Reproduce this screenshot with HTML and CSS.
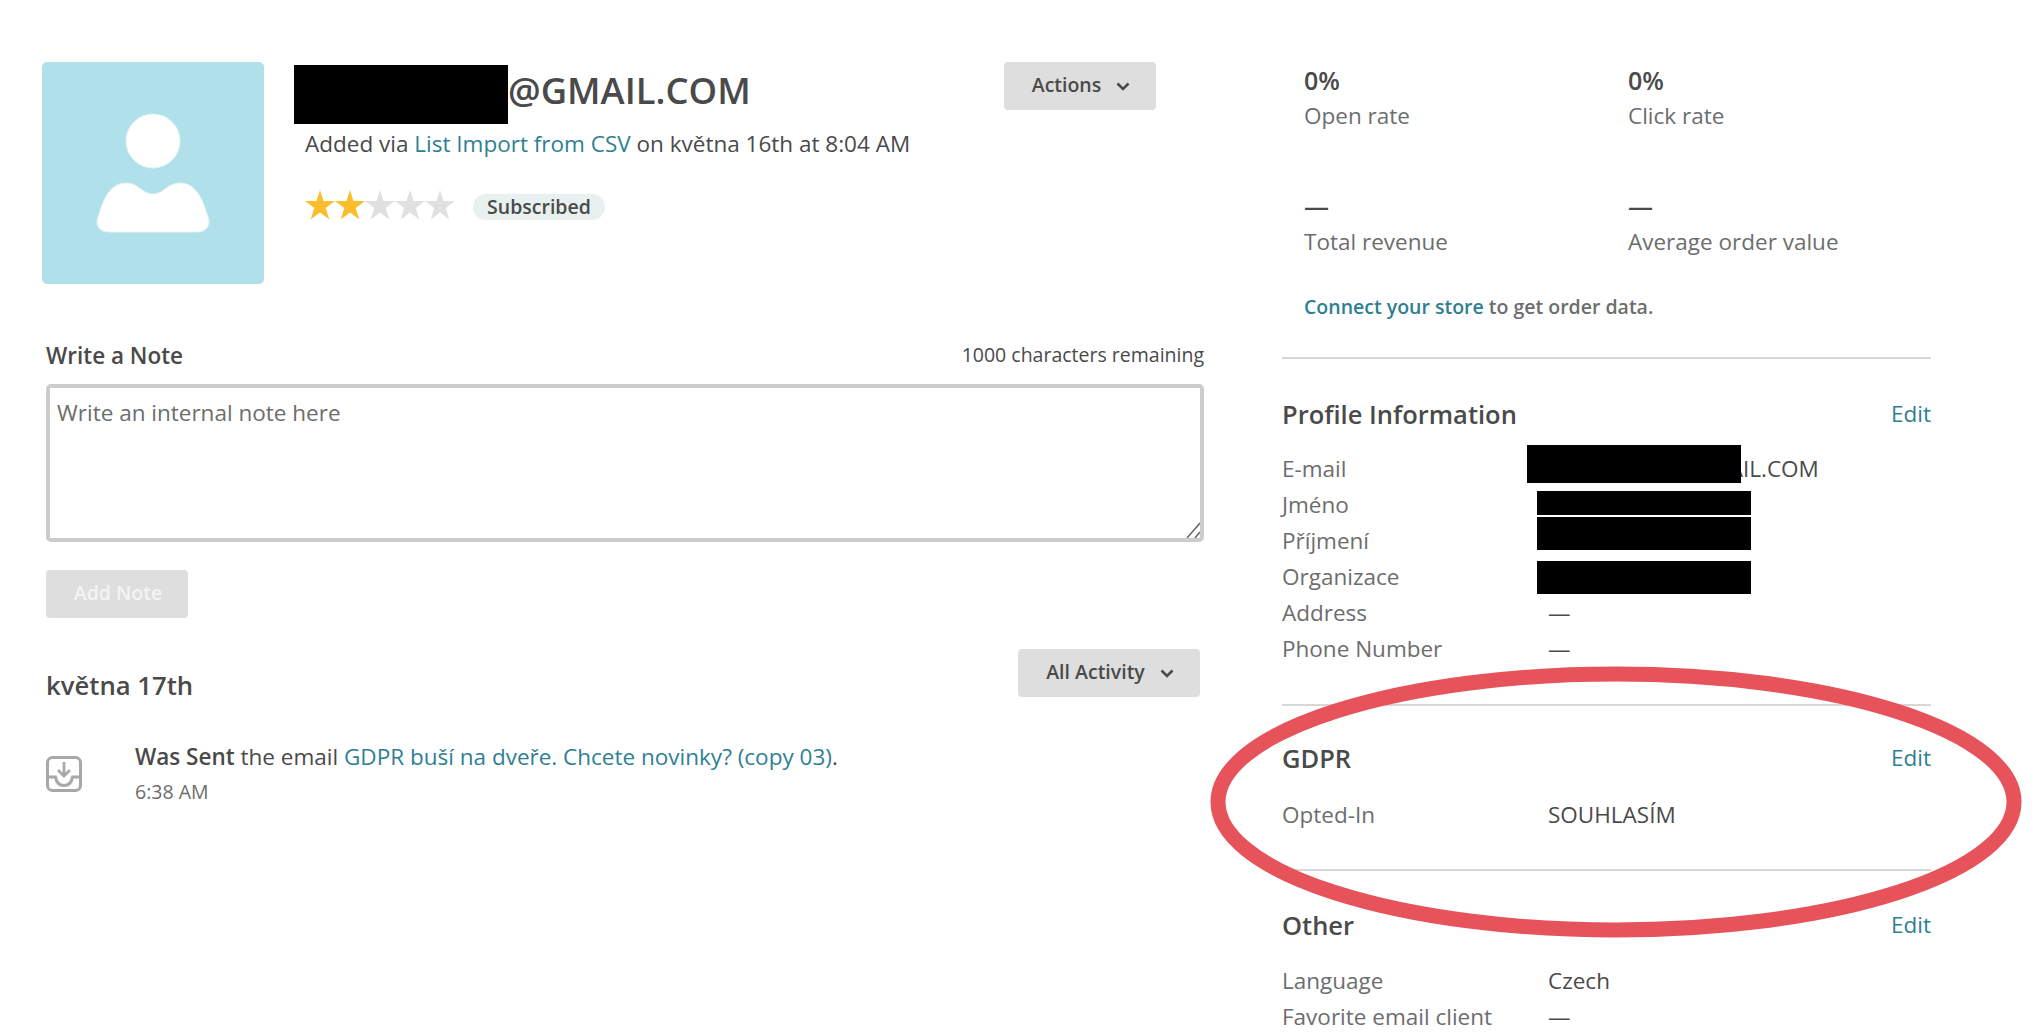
FILE: index.html
```html
<!DOCTYPE html>
<html lang="en">
<head>
<meta charset="utf-8">
<title>Profile</title>
<link rel="stylesheet" href="styles.css">
</head>
<body>
<div class="page">
  <main class="left">
    <section class="head">
      <div class="avatar">
        <svg width="222" height="222" viewBox="0 0 222 222"><circle cx="111" cy="79" r="27" fill="#fff" stroke="#e4f3f5"/><path d="M67 170H155C165 170 169 163 166 155C161 139 155 121 138 121C125 121 122 132 111 132C100 132 97 121 84 121C67 121 61 139 56 155C53 163 57 170 67 170Z" fill="#fff" stroke="#e4f3f5"/></svg>
      </div>
      <div class="who">
        <div class="title-row">
          <h1 class="title"><span class="mask-title"></span>@GMAIL.COM</h1>
          <button class="btn btn-actions">Actions<svg class="chev" width="14" height="9" viewBox="0 0 14 9"><path d="M1.500 1.500 7 7 12.500 1.500" fill="none" stroke="#4a4a4a" stroke-width="2.600"/></svg></button>
        </div>
        <p class="added">Added via <a href="#">List Import from CSV</a> on května 16th at 8:04 AM</p>
        <div class="rating">
          <svg width="150" height="30" viewBox="0 0 150 30"><path fill="#fdbe2e" d="M15 0 18.500 11H30L20.700 18 24.300 29.500 15 22.500 5.700 29.500 9.300 18 0 11H11.500Z"/><path fill="#fdbe2e" transform="translate(30)" d="M15 0 18.500 11H30L20.700 18 24.300 29.500 15 22.500 5.700 29.500 9.300 18 0 11H11.500Z"/><path fill="#e0e0e0" transform="translate(60)" d="M15 0 18.500 11H30L20.700 18 24.300 29.500 15 22.500 5.700 29.500 9.300 18 0 11H11.500Z"/><path fill="#e0e0e0" transform="translate(90)" d="M15 0 18.500 11H30L20.700 18 24.300 29.500 15 22.500 5.700 29.500 9.300 18 0 11H11.500Z"/><path fill="#e0e0e0" transform="translate(120)" d="M15 0 18.500 11H30L20.700 18 24.300 29.500 15 22.500 5.700 29.500 9.300 18 0 11H11.500Z"/></svg>
          <span class="badge">Subscribed</span>
        </div>
      </div>
    </section>

    <section class="note">
      <div class="note-top"><h2 class="note-title">Write a Note</h2><span class="remain">1000 characters remaining</span></div>
      <div class="area-wrap">
        <textarea class="area" placeholder="Write an internal note here"></textarea>
        <svg class="grip" width="14" height="16" viewBox="0 0 14 16" fill="none" stroke="#666" stroke-width="1.500"><path d="M1 16 14 1M9 16 14 10"/></svg>
      </div>
      <button class="btn btn-add">Add Note</button>
    </section>

    <section class="activity">
      <div class="act-top"><h2 class="date">května 17th</h2><button class="btn btn-all">All Activity<svg class="chev" width="14" height="9" viewBox="0 0 14 9"><path d="M1.500 1.500 7 7 12.500 1.500" fill="none" stroke="#4a4a4a" stroke-width="2.600"/></svg></button></div>
      <div class="event">
        <svg class="event-icon" width="36" height="36" viewBox="0 0 36 36" fill="none" stroke="#a8a8a8" stroke-width="3"><rect x="1.500" y="1.500" width="33" height="33" rx="5"/><path d="M1.500 21H9.500C10.500 27 14 29.500 18 29.500S25.500 27 26.500 21H34.500"/><path d="M18 6V19.500M12 14 18 20 24 14" stroke-width="2.800"/></svg>
        <div>
          <p class="event-text"><b>Was Sent</b> the email <a href="#">GDPR buší na dveře. Chcete novinky? (copy 03)</a>.</p>
          <p class="event-time">6:38 AM</p>
        </div>
      </div>
    </section>
  </main>

  <aside class="right">
    <div class="stats">
      <div class="stat"><strong>0%</strong><span>Open rate</span></div>
      <div class="stat"><strong>0%</strong><span>Click rate</span></div>
      <div class="stat"><strong>—</strong><span>Total revenue</span></div>
      <div class="stat"><strong>—</strong><span>Average order value</span></div>
    </div>
    <p class="connect"><a href="#">Connect your store</a> to get order data.</p>

    <section class="panel panel-profile">
      <div class="panel-head"><h3>Profile Information</h3><a href="#">Edit</a></div>
      <div class="row"><span>E-mail</span><span class="val val-email">@GMAIL.COM</span><i class="mask mask-email"></i></div>
      <div class="row"><span>Jméno</span><span class="val"></span><i class="mask mask-first"></i></div>
      <div class="row"><span>Příjmení</span><span class="val"></span><i class="mask mask-last"></i></div>
      <div class="row"><span>Organizace</span><span class="val"></span><i class="mask mask-org"></i></div>
      <div class="row"><span>Address</span><span class="val">—</span></div>
      <div class="row"><span>Phone Number</span><span class="val">—</span></div>
    </section>

    <section class="panel panel-gdpr">
      <div class="panel-head"><h3>GDPR</h3><a href="#">Edit</a></div>
      <div class="row"><span>Opted-In</span><span class="val">SOUHLASÍM</span></div>
    </section>

    <section class="panel panel-other">
      <div class="panel-head"><h3>Other</h3><a href="#">Edit</a></div>
      <div class="row"><span>Language</span><span class="val">Czech</span></div>
      <div class="row"><span>Favorite email client</span><span class="val">—</span></div>
    </section>
  </aside>
</div>
<svg class="circle" width="812" height="272" viewBox="0 0 812 272"><ellipse cx="406" cy="136" rx="398" ry="128" fill="none" stroke="#e6535a" stroke-width="15"/></svg>
</body>
</html>
```
FILE: styles.css
```css
* { box-sizing: border-box; }
html, body { margin: 0; height: 1034px; overflow: hidden; background: #fff; }
body { font-family: "Open Sans", "Noto Sans", sans-serif; color: #4a4a4a; font-size: 22.5px; position: relative; }
a { color: #2f7f93; text-decoration: none; }
h1, h2, h3, p { margin: 0; }
button { font-family: inherit; border: 0; }

.page { display: flex; padding: 62px 105px 0 42px; gap: 78px; }
.left { width: 1162px; flex: none; }
.right { width: 649px; flex: none; }

.head { display: flex; gap: 30px; height: 222px; }
.avatar { width: 222px; height: 222px; background: #b0e1eb; border-radius: 5px; flex: none; }
.avatar svg { display: block; }
.who { flex: 1; }
.title-row { display: flex; justify-content: space-between; width: 862px; height: 62px; }
.title { font-size: 36.4px; font-weight: 600; line-height: 57px; display: flex; align-items: flex-start; }
.mask-title { display: block; width: 214px; height: 59px; margin-top: 3px; background: #000; }
.btn { display: flex; align-items: center; justify-content: center; gap: 15px; background: #dedede; border-radius: 4px; height: 48px; font-size: 19.5px; font-weight: 600; color: #4a4a4a; padding: 0 0 3px 2px; }
.btn-actions { width: 152px; }
.chev { display: block; margin-top: 3px; }
.added { margin: 2px 0 0 11px; line-height: 36px; }
.rating { display: flex; align-items: flex-start; margin: 28px 0 0 11px; gap: 18px; }
.rating svg { display: block; }
.badge { background: #e8f1ef; border-radius: 13px; height: 26px; line-height: 26px; width: 132px; margin-top: 4px; text-align: center; font-size: 19.5px; font-weight: 600; }

.note { margin: 51px 0 0 4px; width: 1158px; }
.note-top { display: flex; justify-content: space-between; align-items: center; height: 40px; }
.note-title { font-size: 22.5px; font-weight: 600; }
.remain { font-size: 19.5px; margin-bottom: 2px; }
.area-wrap { position: relative; margin-top: 9px; }
.area { display: block; width: 100%; height: 158px; padding: 10px 7px; border: 4px solid #ccc; border-radius: 5px; font: 22.5px/30px "Open Sans", sans-serif; color: #4a4a4a; background: #fff; outline: 0; resize: none; }
.area::placeholder { color: #6d6d6d; opacity: 1; }
.grip { position: absolute; right: 4px; bottom: 4px; }
.btn-add { width: 142px; margin-top: 28px; background: #dedede; color: #f4f4f4; }

.activity { margin: 31px 0 0 4px; width: 1154px; }
.act-top { display: flex; justify-content: space-between; }
.date { font-size: 25.7px; font-weight: 600; line-height: 36px; margin-top: 19px; }
.btn-all { width: 182px; }
.event { display: flex; gap: 53px; margin-top: 35px; }
.event-icon { flex: none; margin-top: 17px; }
.event-text { line-height: 36px; }
.event-text b { font-weight: 600; }
.event-time { font-size: 19.5px; line-height: 28px; margin-top: 3px; color: #6d6d6d; }

.stats { display: grid; grid-template-columns: 324px 1fr; row-gap: 48px; padding: 0 0 0 22px; }
.stat { display: flex; flex-direction: column; height: 78px; }
.stat strong { font-weight: 600; font-size: 25px; line-height: 36px; }
.stat span { line-height: 34px; padding-top: 1px; color: #6d6d6d; }
.connect { margin: 26px 0 0 22px; font-size: 19.5px; font-weight: 600; line-height: 30px; color: #6d6d6d; }

.panel { border-top: 2px solid #d8d8d8; }
.panel-profile { margin-top: 35px; height: 347px; padding-top: 36px; }
.panel-gdpr { height: 165px; padding-top: 33px; }
.panel-other { padding-top: 35px; }
.panel-head { display: flex; justify-content: space-between; align-items: center; height: 38px; margin-bottom: 18px; }
.panel-head a { margin-bottom: 2px; }
.panel-profile .panel-head { margin-bottom: 17px; }
.panel-gdpr .panel-head { margin-bottom: 19px; }
.panel-head h3 { font-size: 25.5px; font-weight: 600; }
.row { display: flex; height: 36px; line-height: 38px; position: relative; color: #6d6d6d; }
.row > span:first-child { width: 266px; flex: none; }
.val { color: #4a4a4a; }
.val-email { padding-left: 124px; }
.mask { position: absolute; background: #000; }
.mask-email { left: 245px; top: -5px; width: 214px; height: 38px; }
.mask-first { left: 255px; top: 5px; width: 214px; height: 24px; }
.mask-last { left: 255px; top: -5px; width: 214px; height: 33px; }
.mask-org { left: 255px; top: 3px; width: 214px; height: 33px; }

.circle { position: absolute; left: 1210px; top: 666px; }
```
